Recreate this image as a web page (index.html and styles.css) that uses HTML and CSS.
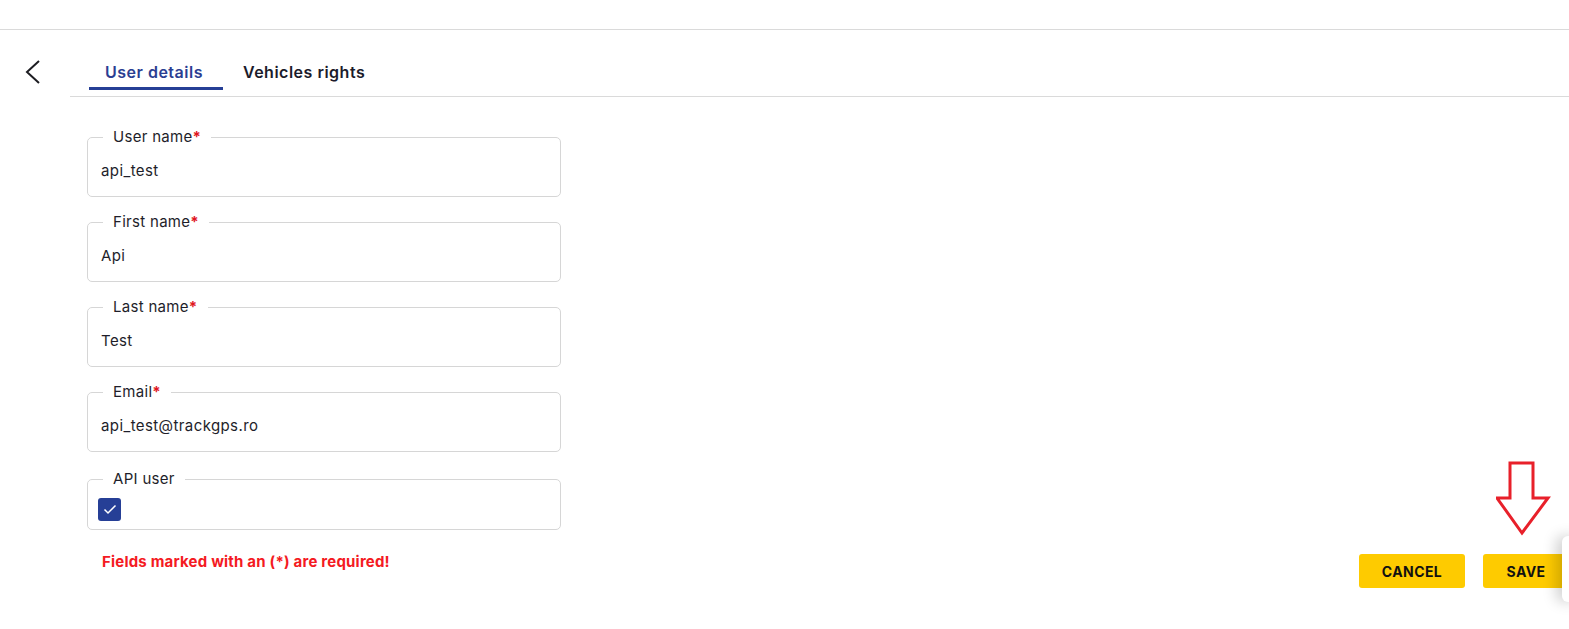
FILE: index.html
```html
<!DOCTYPE html>
<html lang="en">
<head>
<meta charset="utf-8">
<title>User details</title>
<link rel="stylesheet" href="styles.css">
</head>
<body>
<header class="topbar"></header>
<div class="page">
  <div class="back-col">
    <button class="back" type="button" aria-label="Back">
      <svg width="16" height="24" viewBox="0 0 16 24"><polyline points="14,1 2,12 14,23" fill="none" stroke="#1d1d22" stroke-width="2"/></svg>
    </button>
  </div>
  <div class="content">
    <nav class="tabs">
      <a class="tab tab-active">User details</a>
      <a class="tab">Vehicles rights</a>
    </nav>
    <form class="form">
      <fieldset class="field">
        <legend>User name<span class="req">*</span></legend>
        <div class="value">api_test</div>
      </fieldset>
      <fieldset class="field">
        <legend>First name<span class="req">*</span></legend>
        <div class="value">Api</div>
      </fieldset>
      <fieldset class="field">
        <legend>Last name<span class="req">*</span></legend>
        <div class="value">Test</div>
      </fieldset>
      <fieldset class="field">
        <legend>Email<span class="req">*</span></legend>
        <div class="value">api_test@trackgps.ro</div>
      </fieldset>
      <fieldset class="field field-check">
        <legend>API user</legend>
        <span class="checkbox">
          <svg width="14" height="11" viewBox="0 0 14 11"><polyline points="1.5,5.5 5,9 12.5,1.5" fill="none" stroke="#fff" stroke-width="1.5"/></svg>
        </span>
      </fieldset>
    </form>
    <div class="footer-row">
      <p class="error">Fields marked with an (*) are required!</p>
      <div class="actions">
        <button class="btn" type="button">CANCEL</button>
        <button class="btn btn-save" type="button">SAVE</button>
      </div>
    </div>
  </div>
</div>
<div class="side-panel"></div>
<svg class="annotation" width="60" height="80" viewBox="0 0 60 80">
  <polygon points="14,3 37,3 37,38 52,38 26,73 1,38 14,38" fill="#fff" stroke="#e8202a" stroke-width="3" stroke-linejoin="miter"/>
</svg>
</body>
</html>
```
FILE: styles.css
```css
* { box-sizing: border-box; }
html, body { margin: 0; padding: 0; background: #fff; }
body {
  font-family: "Inter", "Liberation Sans", sans-serif;
  color: #1e1e2a;
  width: 1569px;
  height: 629px;
  overflow: hidden;
  position: relative;
}
.topbar {
  height: 30px;
  border-bottom: 1px solid #dadada;
}
.page {
  display: flex;
}
.back-col {
  width: 70px;
  padding: 30px 0 0 25px;
}
.back {
  border: 0;
  background: none;
  padding: 0;
  display: block;
  cursor: pointer;
}
.back svg { display: block; }
.content {
  flex: 1;
}
.tabs {
  display: flex;
  padding: 30px 0 6px 19px;
  border-bottom: 1px solid #dadada;
}
.tab {
  padding: 0 20px 3px 16px;
  font-size: 16px;
  font-weight: 600;
  line-height: 24px;
  letter-spacing: 0.5px;
  border-bottom: 3px solid transparent;
  color: #1b1b2b;
}
.tab + .tab { margin-left: 4px; }
.tab-active {
  color: #2b3e92;
  border-bottom-color: #263f96;
}
.form {
  width: 491px;
  padding: 31px 0 0 17px;
  display: flex;
  flex-direction: column;
  gap: 16px;
}
.field {
  margin: 0;
  border: 1px solid #d6d6d6;
  border-radius: 5px;
  padding: 15px 13px 15px 13px;
  min-width: 0;
}
.field legend {
  margin-left: 2px;
  padding: 0 10px;
  font-size: 15px;
  line-height: 18px;
  letter-spacing: 0.3px;
  color: #1e1e2a;
}
.req { color: #e0161e; font-weight: 700; }
.value {
  font-size: 15px;
  line-height: 20px;
  letter-spacing: 0.4px;
  color: #1e1e2a;
}
.field-check {
  margin-top: 2px;
  padding: 10px 10px 8px;
}
.field-check legend {
  margin-left: 5px;
}
.checkbox {
  display: flex;
  align-items: center;
  justify-content: center;
  width: 23px;
  height: 23px;
  background: #263f96;
  border-radius: 3px;
}
.footer-row {
  display: flex;
  justify-content: space-between;
  align-items: flex-start;
  padding: 22px 0 0 32px;
}
.error {
  margin: 1px 0 0;
  font-size: 15px;
  line-height: 18px;
  font-weight: 700;
  letter-spacing: 0.2px;
  color: #f41a22;
}
.actions {
  display: flex;
  gap: 18px;
  margin-top: 2px;
}
.btn {
  height: 34px;
  border: 0;
  border-radius: 3px;
  background: #fecb00;
  font-family: "Inter", "Liberation Sans", sans-serif;
  font-size: 14px;
  font-weight: 700;
  letter-spacing: 0.4px;
  color: #111;
  padding: 0;
  width: 106px;
  text-align: center;
}
.btn-save {
  width: 86px;
}
.side-panel {
  position: absolute;
  left: 1562px;
  top: 536px;
  width: 20px;
  height: 66px;
  background: #fff;
  border-radius: 6px 0 0 6px;
  box-shadow: -6px 0 14px rgba(0, 0, 0, 0.18);
}
.annotation {
  position: absolute;
  left: 1496px;
  top: 460px;
}
```
